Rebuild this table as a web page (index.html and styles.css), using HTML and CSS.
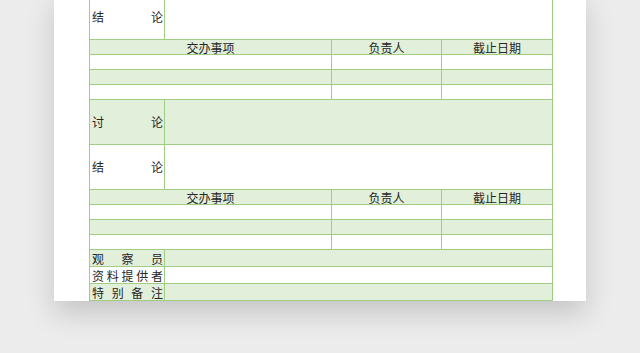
FILE: index.html
```html
<!DOCTYPE html>
<html lang="zh-CN">
<head>
<meta charset="utf-8">
<title>会议纪要</title>
<link rel="stylesheet" href="styles.css">
</head>
<body>
<div class="sheet">
  <div class="grid">
    <div class="cell label row-tall">结论</div>
    <div class="cell span3 row-tall"></div>

    <div class="cell fill head span2">交办事项</div>
    <div class="cell fill head">负责人</div>
    <div class="cell fill head">截止日期</div>
    <div class="cell span2"></div><div class="cell"></div><div class="cell"></div>
    <div class="cell fill span2"></div><div class="cell fill"></div><div class="cell fill"></div>
    <div class="cell span2"></div><div class="cell"></div><div class="cell"></div>

    <div class="cell fill label row-tall">讨论</div>
    <div class="cell fill span3 row-tall"></div>
    <div class="cell label row-tall">结论</div>
    <div class="cell span3 row-tall"></div>

    <div class="cell fill head span2">交办事项</div>
    <div class="cell fill head">负责人</div>
    <div class="cell fill head">截止日期</div>
    <div class="cell span2"></div><div class="cell"></div><div class="cell"></div>
    <div class="cell fill span2"></div><div class="cell fill"></div><div class="cell fill"></div>
    <div class="cell span2"></div><div class="cell"></div><div class="cell"></div>

    <div class="cell fill label row-mid">观察员</div>
    <div class="cell fill span3 row-mid"></div>
    <div class="cell label row-mid">资料提供者</div>
    <div class="cell span3 row-mid"></div>
    <div class="cell fill label row-mid">特别备注</div>
    <div class="cell fill span3 row-mid"></div>
  </div>
</div>
</body>
</html>
```
FILE: styles.css
```css
html, body {
  margin: 0;
  padding: 0;
}

body {
  background: #ececec;
  height: 353px;
  overflow: hidden;
  font-family: "Noto Sans CJK SC", "Noto Sans", sans-serif;
  color: #262626;
}

.sheet {
  width: 532px;
  height: 307px;
  margin: -6px 0 0 54px;
  background: #fff;
  box-shadow: 0 12px 26px rgba(0, 0, 0, 0.17);
  padding: 0 34px 0 35px;
  box-sizing: border-box;
}

/* the green rules are the 1px gaps showing the grid background */
.grid {
  display: grid;
  grid-template-columns: 74px 166px 109px 110px;
  gap: 1px;
  padding: 1px;
  background: #a0cd84;
  width: 464px;
  box-sizing: border-box;
}

.cell {
  background: #fff;
  height: 14px;
  font-size: 12px;
  line-height: 14px;
}

.fill {
  background: #e2efda;
}

.span2 { grid-column: span 2; }
.span3 { grid-column: span 3; }

.row-tall { height: 44px; }
.row-mid { height: 16px; }

.head {
  text-align: center;
  line-height: 16px;
}

.label {
  padding: 0 1px 0 2px;
  text-align: justify;
  text-align-last: justify;
}

.label.row-tall { line-height: 44px; }
.label.row-mid { line-height: 17px; }
```
